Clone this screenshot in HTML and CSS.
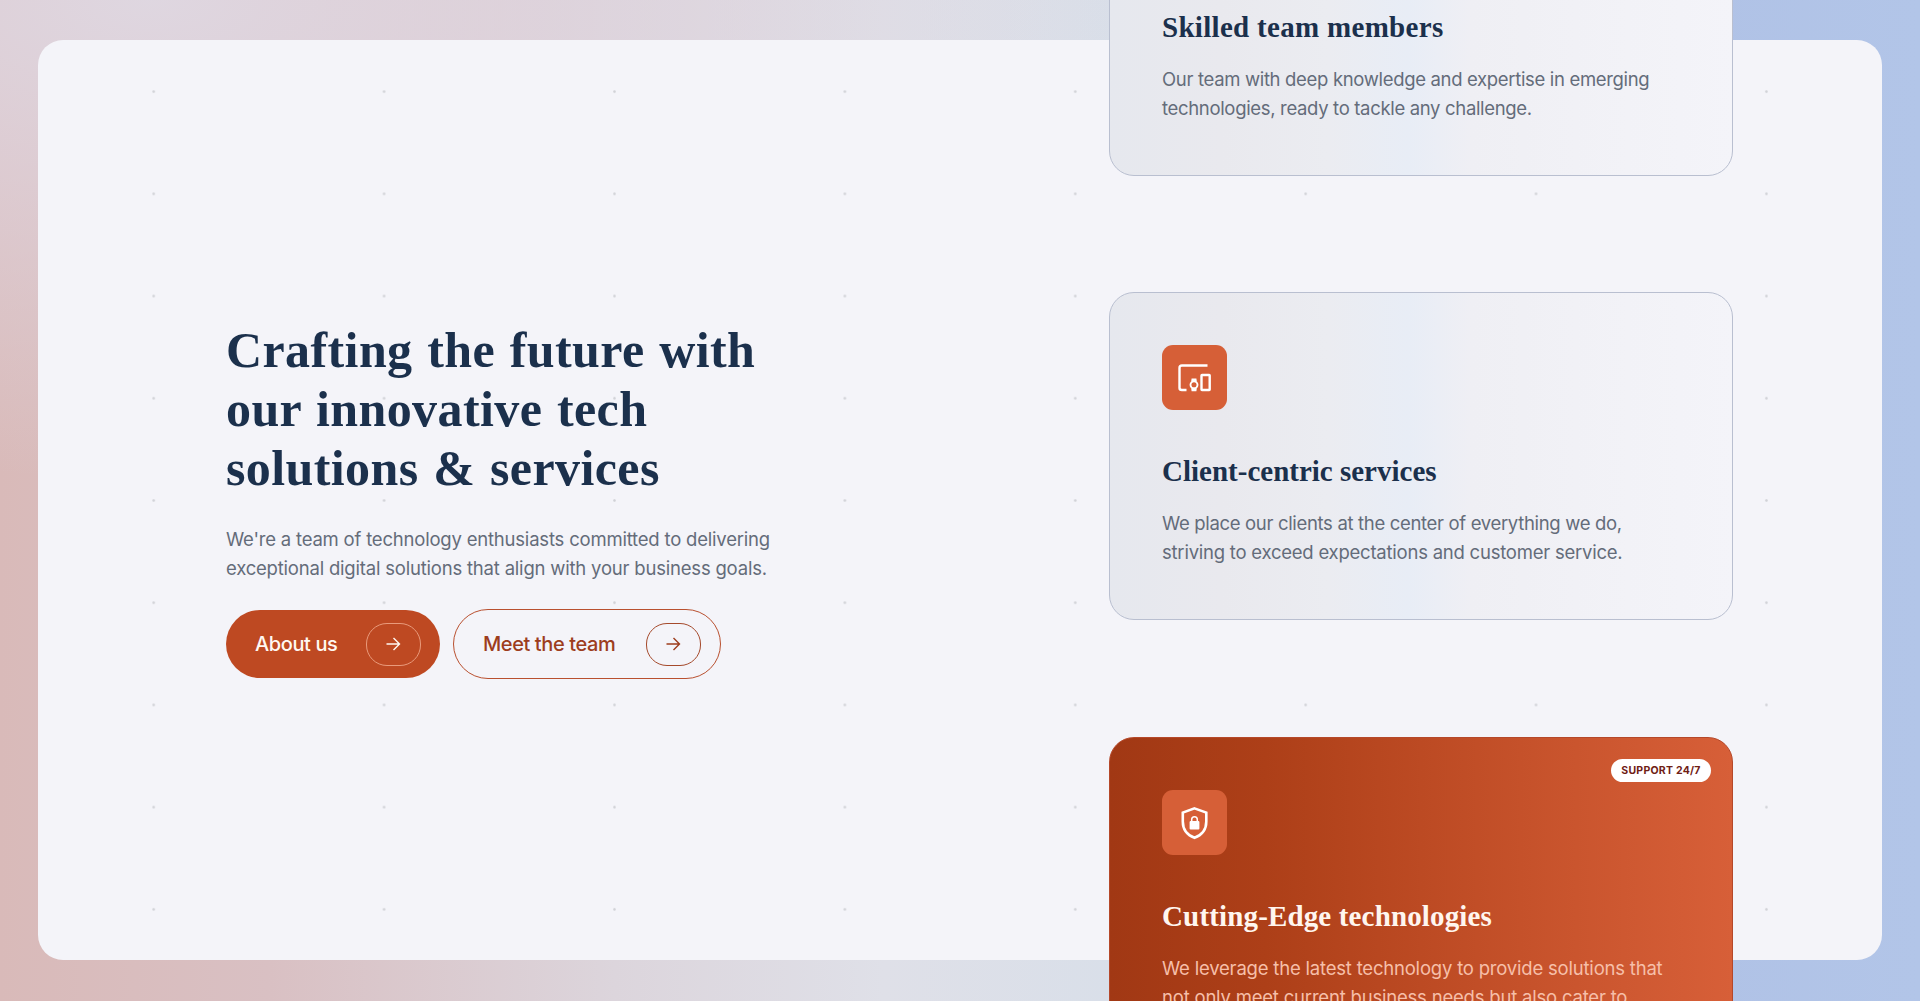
FILE: index.html
```html
<!DOCTYPE html>
<html lang="en">
<head>
  <meta charset="UTF-8">
  <meta name="viewport" content="width=device-width, initial-scale=1.0">
  <title>Tech solutions &amp; services</title>
  <link rel="stylesheet" href="styles.css">
</head>
<body>
  <main class="page">
    <section class="panel">
      <div class="intro">
        <h1>Crafting the future with<br>our innovative tech<br>solutions &amp; services</h1>
        <p>We're a team of technology enthusiasts committed to delivering<br>exceptional digital solutions that align with your business goals.</p>
        <div class="buttons">
          <a class="btn btn-filled" href="#">
            <span>About us</span>
            <span class="arrow"><svg width="16" height="16" viewBox="0 0 16 16"><path d="M1.5 8h12.5M8.5 2l6 6-6 6"/></svg></span>
          </a>
          <a class="btn btn-outline" href="#">
            <span>Meet the team</span>
            <span class="arrow"><svg width="16" height="16" viewBox="0 0 16 16"><path d="M1.5 8h12.5M8.5 2l6 6-6 6"/></svg></span>
          </a>
        </div>
      </div>

      <div class="cards">
        <article class="card card-team">
          <div class="icon">
            <svg width="35" height="35" viewBox="0 0 24 24"><circle cx="9" cy="8" r="3.5" fill="none" stroke="#fff" stroke-width="1.5"/><path d="M2.5 19c0-7 13-7 13 0zM16 5a3.4 3.4 0 0 1 0 6.5M18 13.5c2.5.8 3.5 2.5 3.5 5.5" fill="none" stroke="#fff" stroke-width="1.5"/></svg>
          </div>
          <h2>Skilled team members</h2>
          <p>Our team with deep knowledge and expertise in emerging<br>technologies, ready to tackle any challenge.</p>
        </article>

        <article class="card card-client">
          <div class="icon">
            <svg width="36" height="30" viewBox="0 0 36 30" fill="none" stroke="#fff" stroke-width="2.4">
              <path d="M30.5 2.500H5Q2.500 2.500 2.500 5V25Q2.500 27 5 27H9.500"/>
              <rect x="24.500" y="12" width="8.200" height="15" rx="0.500"/>
              <circle cx="17" cy="21.800" r="3.500" stroke-width="1.900"/>
              <path d="M14.200 18.300l.4-2.800h4.800l.4 2.800zM14.200 25.300l.4 2.900h4.800l.4-2.900z" fill="#fff" stroke="none"/>
            </svg>
          </div>
          <h2>Client-centric services</h2>
          <p>We place our clients at the center of everything we do,<br><span class="wider">striving to exceed expectations and customer service.</span></p>
        </article>

        <article class="card card-dark">
          <span class="badge">SUPPORT 24/7</span>
          <div class="icon">
            <svg width="28" height="34" viewBox="0 0 28 34">
              <path d="M13.500 2.400 25.300 6.600V15.500C25.300 23 21 29 13.500 31.800 6 29 1.800 23 1.800 15.500V6.600Z" fill="none" stroke="#fff" stroke-width="2.6"/>
              <path d="M10.700 15.500V13.500a2.800 2.800 0 0 1 5.600 0V15.500" fill="none" stroke="#fff" stroke-width="1.500"/>
              <rect x="8.600" y="15" width="9.800" height="8.400" rx="1" fill="#fff"/>
            </svg>
          </div>
          <h2>Cutting-Edge technologies</h2>
          <p>We leverage the latest technology to provide solutions that<br>not only meet current business needs but also cater to</p>
        </article>
      </div>
    </section>
  </main>
</body>
</html>
```
FILE: styles.css
```css
* {
  box-sizing: border-box;
}
body {
  margin: 0;
  font-family: Inter, "Liberation Sans", sans-serif;
  overflow: hidden;
}
.page {
  height: 1001px;
  padding: 40px 38.4px;
  overflow: hidden;
  background:
    radial-gradient(ellipse 1000px 480px at 150px 0, rgba(223, 216, 226, 0.95) 0, rgba(223, 212, 222, 0.7) 35%, rgba(222, 210, 218, 0) 100%),
    linear-gradient(to right, #d9bab9 0, #d9c0c3 14%, #dcd5dc 32%, #dfe0e8 46%, #d9dfe9 58%, #b0c2e6 88%, #b2c5e8 100%);
}
.panel {
  height: 920px;
  border-radius: 25px;
  display: flex;
  justify-content: space-between;
  padding: 0 148.6px 0 187.6px;
  background: radial-gradient(circle at center, #d0d1d6 0, #d8d9de 1px, transparent 1.7px) 0.5px 0.5px / 230.4px 102.22px #f4f4f9;
}
.intro {
  padding-top: 281px;
}
h1 {
  margin: 0;
  font-family: "Liberation Serif", serif;
  font-size: 50px;
  line-height: 59px;
  font-weight: bold;
  letter-spacing: 0.4px;
  word-spacing: 1.8px;
  color: #1b304c;
  white-space: nowrap;
}
p {
  margin: 0;
  font-size: 18.5px;
  line-height: 29.2px;
  letter-spacing: -0.2px;
  color: #646c7a;
  white-space: nowrap;
}
.intro p {
  margin-top: 27px;
}
.buttons {
  display: flex;
  align-items: center;
  gap: 13px;
  margin-top: 26px;
}
.btn {
  display: flex;
  align-items: center;
  justify-content: space-between;
  height: 68px;
  border-radius: 35px;
  font-size: 20px;
  font-weight: 500;
  letter-spacing: -0.4px;
  text-decoration: none;
  white-space: nowrap;
}
.btn-filled {
  width: 214.5px;
  padding: 0 19.5px 0 29px;
  background: #be4922;
  color: #fff8f2;
}
.btn-outline {
  width: 268px;
  height: 70px;
  padding: 0 19.5px 0 28.5px;
  border: 1px solid #b9502f;
  color: #9d3d1d;
}
.arrow {
  display: flex;
  align-items: center;
  justify-content: center;
  width: 55px;
  height: 43px;
  border: 1px solid #e99a7b;
  border-radius: 21px;
}
.btn-outline .arrow {
  border-color: #a54a2c;
}
.arrow svg {
  fill: none;
  stroke: currentColor;
  stroke-width: 1.4;
}
.cards {
  display: flex;
  flex-direction: column;
  gap: 116px;
  margin-top: -192px;
  width: 624px;
}
.card {
  position: relative;
  flex: none;
  height: 328px;
  padding: 52px;
  border: 1px solid #b9bfd0;
  border-radius: 25px;
  background: linear-gradient(to right, #e6e8ee 0, #e9e9ee 18%, #ebecf1 35%, #e8edf6 48%, #efeff4 58%, #f4f4f9 100%);
}
.icon {
  display: flex;
  align-items: center;
  justify-content: center;
  width: 65px;
  height: 65px;
  border-radius: 11px;
  background: #d65f37;
}
h2 {
  margin: 43px 0 0;
  font-family: "Liberation Serif", serif;
  font-size: 29px;
  line-height: 36px;
  font-weight: bold;
  color: #1b304c;
  white-space: nowrap;
}
.card p {
  margin-top: 20px;
}
.card-team h2 {
  letter-spacing: 0.3px;
}
.card-team p,
.card-client p {
  letter-spacing: -0.33px;
}
.card-client .wider {
  letter-spacing: -0.23px;
}
.card-dark {
  margin-top: 1px;
  border-color: #b5482a;
  background: linear-gradient(to right, #a13814, #ad3f18 25%, #bc4a23 50%, #ca552e 75%, #d75f38);
}
.card-dark h2 {
  letter-spacing: 0.15px;
  color: #fff6ef;
}
.card-dark p {
  color: #f6bfa9;
}
.badge {
  position: absolute;
  top: 21px;
  right: 21px;
  width: 100px;
  height: 23px;
  border-radius: 12px;
  background: #fff;
  color: #6f2014;
  font-size: 10.5px;
  line-height: 23px;
  font-weight: 700;
  letter-spacing: 0.25px;
  text-align: center;
  white-space: nowrap;
}
```
